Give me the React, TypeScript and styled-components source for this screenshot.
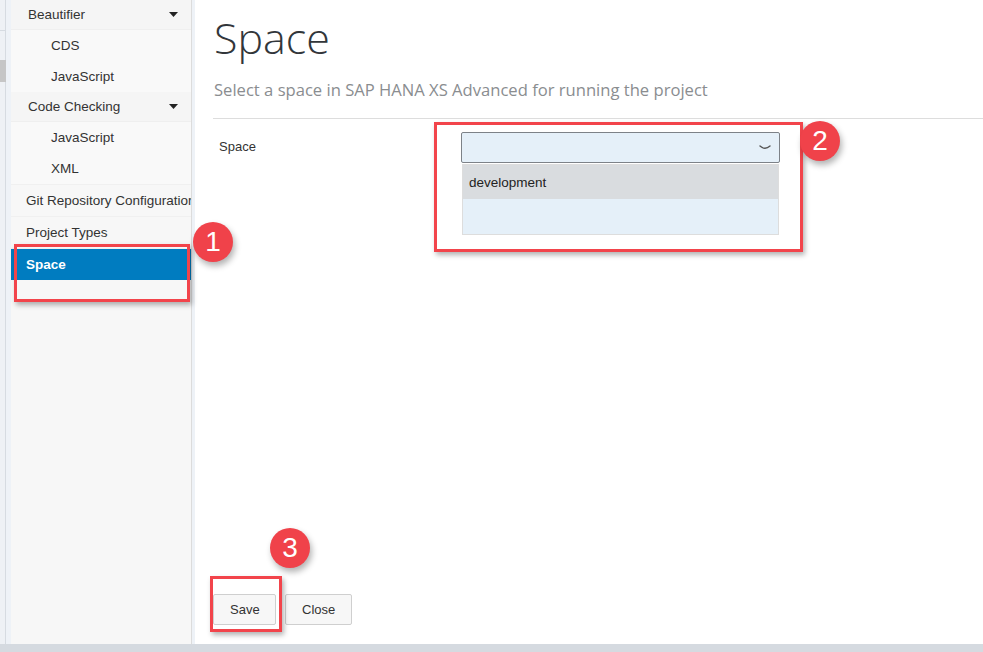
import React from 'react'
import styled, { createGlobalStyle } from 'styled-components'

const GlobalStyle = createGlobalStyle`
  html, body {
    margin: 0;
    padding: 0;
    background: #ffffff;
  }
  body {
    font-family: "Liberation Sans", Arial, sans-serif;
  }
`

type NavEntry =
  | { kind: 'group'; label: string }
  | { kind: 'sub'; label: string }
  | { kind: 'item'; label: string; active?: boolean }

const nav: NavEntry[] = [
  { kind: 'group', label: 'Beautifier' },
  { kind: 'sub', label: 'CDS' },
  { kind: 'sub', label: 'JavaScript' },
  { kind: 'group', label: 'Code Checking' },
  { kind: 'sub', label: 'JavaScript' },
  { kind: 'sub', label: 'XML' },
  { kind: 'item', label: 'Git Repository Configuration' },
  { kind: 'item', label: 'Project Types' },
  { kind: 'item', label: 'Space', active: true },
]

const Caret = () => (
  <svg width="9" height="5" viewBox="0 0 9 5">
    <path d="M0 0 L9 0 L4.5 5 Z" fill="#222" />
  </svg>
)

const Chevron = () => (
  <svg width="12" height="6" viewBox="0 0 12 6">
    <path d="M1 1 Q6 5.5 11 1" fill="none" stroke="#555" strokeWidth="1.4" strokeLinecap="round" />
  </svg>
)

const App = () => {
  return (
    <Page>
      <GlobalStyle />
      <Body>
        <Rail>
          <RailTrack>
            <RailThumb />
          </RailTrack>
        </Rail>
        <Sidebar>
          {nav.map((n, i) =>
            n.kind === 'group' ? (
              <GroupRow key={i}>
                <span>{n.label}</span>
                <Caret />
              </GroupRow>
            ) : n.kind === 'sub' ? (
              <SubRow key={i}>{n.label}</SubRow>
            ) : (
              <ItemRow key={i} $active={n.active}>
                {n.label}
              </ItemRow>
            )
          )}
        </Sidebar>
        <Gutter />
        <Main>
          <Title>Space</Title>
          <Subtitle>Select a space in SAP HANA XS Advanced for running the project</Subtitle>
          <Rule />
          <FormRow>
            <Label>Space</Label>
            <SelectWrap>
              <SelectBox>
                <Chevron />
              </SelectBox>
              <Dropdown>
                <Option $hover>development</Option>
                <Option />
              </Dropdown>
            </SelectWrap>
          </FormRow>
          <Footer>
            <Button>Save</Button>
            <Button>Close</Button>
          </Footer>
        </Main>
      </Body>
      <StatusBar />

      <Frame style={{ left: 14, top: 244, width: 176, height: 58 }} />
      <Frame style={{ left: 434, top: 122, width: 369, height: 130 }} />
      <Frame style={{ left: 210, top: 576, width: 72, height: 56 }} />
      <Badge style={{ left: 193, top: 222 }}>1</Badge>
      <Badge style={{ left: 800, top: 121 }}>2</Badge>
      <Badge style={{ left: 270, top: 528 }}>3</Badge>
    </Page>
  )
}

export default App

const Page = styled.div`
  position: relative;
  width: 983px;
  height: 652px;
  display: flex;
  flex-direction: column;
  overflow: hidden;
`

const Body = styled.div`
  flex: 1;
  display: flex;
  min-height: 0;
`

const Rail = styled.div`
  width: 11px;
  background: #eef2f7;
  display: flex;
`

const RailTrack = styled.div`
  width: 6px;
  border-right: 1px solid #d6dbe1;
  background: #eef1f5;
  padding-top: 60px;
  box-sizing: border-box;
  background-image: linear-gradient(#d6dbe1, #d6dbe1);
  background-size: 100% 1px;
  background-position: 0 30px;
  background-repeat: no-repeat;
`

const RailThumb = styled.div`
  width: 6px;
  height: 22px;
  background: #c6c6c6;
`

const Sidebar = styled.div`
  width: 180px;
  background: #f7f7f7;
  border-right: 1px solid #dcdcdc;
  display: flex;
  flex-direction: column;
  font-size: 13.5px;
  color: #333;
  overflow: hidden;
`

const GroupRow = styled.div`
  height: 30px;
  flex-shrink: 0;
  display: flex;
  align-items: center;
  justify-content: space-between;
  padding: 0 13px 0 17px;
  background: #f5f5f5;
  border-bottom: 1px solid #efefef;
  box-sizing: border-box;
`

const SubRow = styled.div`
  height: 31px;
  flex-shrink: 0;
  display: flex;
  align-items: center;
  padding-left: 40px;
  background: #f9f9f9;
  box-sizing: border-box;
`

const ItemRow = styled.div<{ $active?: boolean }>`
  height: 32px;
  flex-shrink: 0;
  display: flex;
  align-items: center;
  padding-left: 15px;
  white-space: nowrap;
  box-sizing: border-box;
  border-top: 1px solid #f0f0f0;
  background: ${(p) => (p.$active ? '#007cc0' : '#f7f7f7')};
  color: ${(p) => (p.$active ? '#ffffff' : '#333')};
  font-weight: ${(p) => (p.$active ? 700 : 400)};
`

const Gutter = styled.div`
  width: 3px;
  background: #eef2f7;
`

const Main = styled.div`
  flex: 1;
  display: flex;
  flex-direction: column;
  padding: 0 0 19px 18px;
  background: #fff;
`

const Title = styled.h1`
  margin: 9px 0 0 1px;
  font-family: "Open Sans", sans-serif;
  font-weight: 300;
  font-size: 43px;
  line-height: 58px;
  color: #32363a;
`

const Subtitle = styled.div`
  margin: 12px 0 0 1px;
  font-family: "Open Sans", sans-serif;
  font-size: 16.6px;
  line-height: 22px;
  color: #8a8d90;
`

const Rule = styled.div`
  margin-top: 17px;
  height: 1px;
  background: #dddddd;
`

const FormRow = styled.div`
  display: flex;
  align-items: flex-start;
  padding-top: 13px;
`

const Label = styled.div`
  width: 242px;
  padding: 7px 0 0 6px;
  font-size: 13px;
  color: #333;
`

const SelectWrap = styled.div`
  width: 319px;
  display: flex;
  flex-direction: column;
`

const SelectBox = styled.div`
  height: 31px;
  box-sizing: border-box;
  border: 1px solid #7d8288;
  border-radius: 2px;
  background: #e5f0f9;
  display: flex;
  align-items: center;
  justify-content: flex-end;
  padding-right: 8px;
`

const Dropdown = styled.div`
  margin: 1px 1px 0;
  border: 1px solid #dddddd;
  background: #e5f0f9;
  height: 71px;
  box-sizing: border-box;
`

const Option = styled.div<{ $hover?: boolean }>`
  height: 34px;
  display: flex;
  align-items: center;
  padding-left: 6px;
  font-size: 13.5px;
  color: #222;
  background: ${(p) => (p.$hover ? '#d9dcdf' : 'transparent')};
`

const Footer = styled.div`
  margin-top: auto;
  display: flex;
  gap: 9px;
`

const Button = styled.button`
  height: 31px;
  padding: 0 16px;
  background: #f7f7f7;
  border: 1px solid #cfcfcf;
  border-radius: 2px;
  font-family: "Liberation Sans", Arial, sans-serif;
  font-size: 13px;
  color: #333;
  &:first-child {
    width: 63px;
  }
  &:last-child {
    width: 67px;
  }
`

const StatusBar = styled.div`
  height: 8px;
  background: #d5dae0;
`

const Frame = styled.div`
  position: absolute;
  box-sizing: border-box;
  border: 3px solid #f2444b;
  box-shadow: 2px 3px 5px rgba(0, 0, 0, 0.3);
  pointer-events: none;
`

const Badge = styled.div`
  position: absolute;
  width: 40px;
  height: 40px;
  border-radius: 50%;
  background: #f0424a;
  color: #fff;
  font-family: "Liberation Sans", Arial, sans-serif;
  font-size: 28px;
  display: flex;
  align-items: center;
  justify-content: center;
  box-shadow: 2px 4px 6px rgba(0, 0, 0, 0.3);
`
